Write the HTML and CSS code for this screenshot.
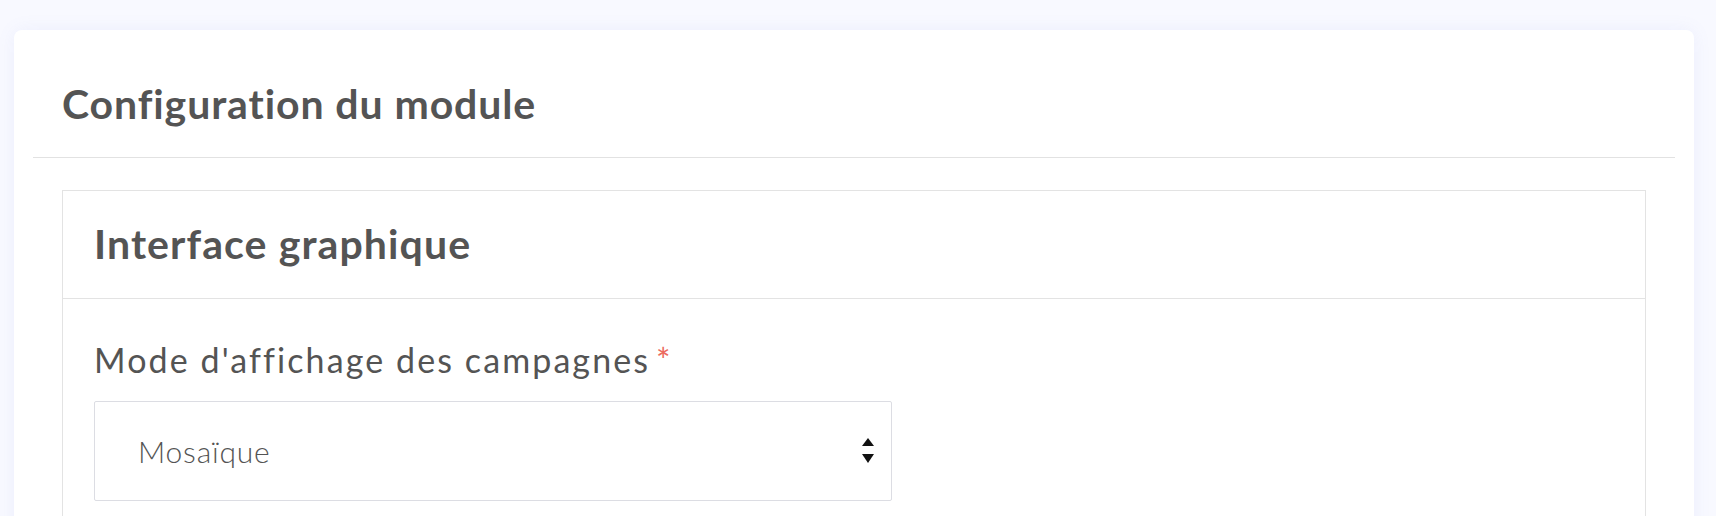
FILE: index.html
```html
<!DOCTYPE html>
<html lang="fr">
<head>
    <meta charset="UTF-8">
    <meta name="viewport" content="width=device-width, initial-scale=1.0">
    <title>Configuration du module</title>
    <link rel="stylesheet" href="styles.css">
</head>
<body>

<div class="card">
    <div class="card-header">
        <h1>Configuration du module</h1>
    </div>

    <div class="card-body">
        <div class="panel">
            <div class="panel-header">
                <h2>Interface graphique</h2>
            </div>
            <div class="panel-body">
                <label for="display-mode">Mode d'affichage des campagnes<span class="required">*</span></label>
                <div class="select-wrap">
                    <select id="display-mode">
                        <option>Mosaïque</option>
                        <option>Liste</option>
                    </select>
                    <svg class="select-arrows" width="12" height="26" viewBox="0 0 12 26">
                        <polygon points="6,0 12,8 0,8" fill="#111"/>
                        <polygon points="0,16 12,16 6,25" fill="#111"/>
                    </svg>
                </div>
            </div>
        </div>
    </div>
</div>

</body>
</html>
```

FILE: styles.css
```css
/* General Styling */
* {
    box-sizing: border-box;
    margin: 0;
    padding: 0;
}

body {
    font-family: 'Lato', 'Open Sans', sans-serif;
    background: #f8f9ff;
    color: #545454;
    padding: 30px 22px 0 14px;
    height: 516px;
    overflow: hidden;
}

/* Main card */
.card {
    background: #ffffff;
    border-radius: 8px;
    box-shadow: 0 0 18px rgba(120, 130, 230, 0.09);
    padding: 0 19px;
    min-height: 600px;
}

.card-header {
    padding: 50px 29px 29px;
    border-bottom: 1px solid #e2e2e2;
}

h1, h2 {
    font-size: 41px;
    line-height: 48px;
    font-weight: 700;
    color: #545454;
    letter-spacing: 0.9px;
}

h2 {
    letter-spacing: 1.1px;
}

.card-body {
    padding: 32px 29px 0;
}

/* Panel */
.panel {
    border: 1px solid #e3e3e3;
}

.panel-header {
    padding: 29px 31px 30px;
    border-bottom: 1px solid #e3e3e3;
}

.panel-body {
    padding: 41px 31px 40px;
}

label {
    display: block;
    font-size: 34px;
    line-height: 40px;
    letter-spacing: 2.1px;
    margin-bottom: 21px;
}

.required {
    color: #ec6a5e;
    margin-left: 6px;
}

/* Select */
.select-wrap {
    position: relative;
    width: 798px;
}

select {
    appearance: none;
    -webkit-appearance: none;
    width: 100%;
    height: 100px;
    padding: 0 43px;
    border: 1px solid #dcdde3;
    border-radius: 2px;
    background: #ffffff;
    font-family: 'Lato', 'Open Sans', sans-serif;
    font-size: 30px;
    font-weight: 300;
    letter-spacing: 0.8px;
    color: #545454;
}

.select-arrows {
    position: absolute;
    right: 18px;
    top: 37px;
    pointer-events: none;
}
```
